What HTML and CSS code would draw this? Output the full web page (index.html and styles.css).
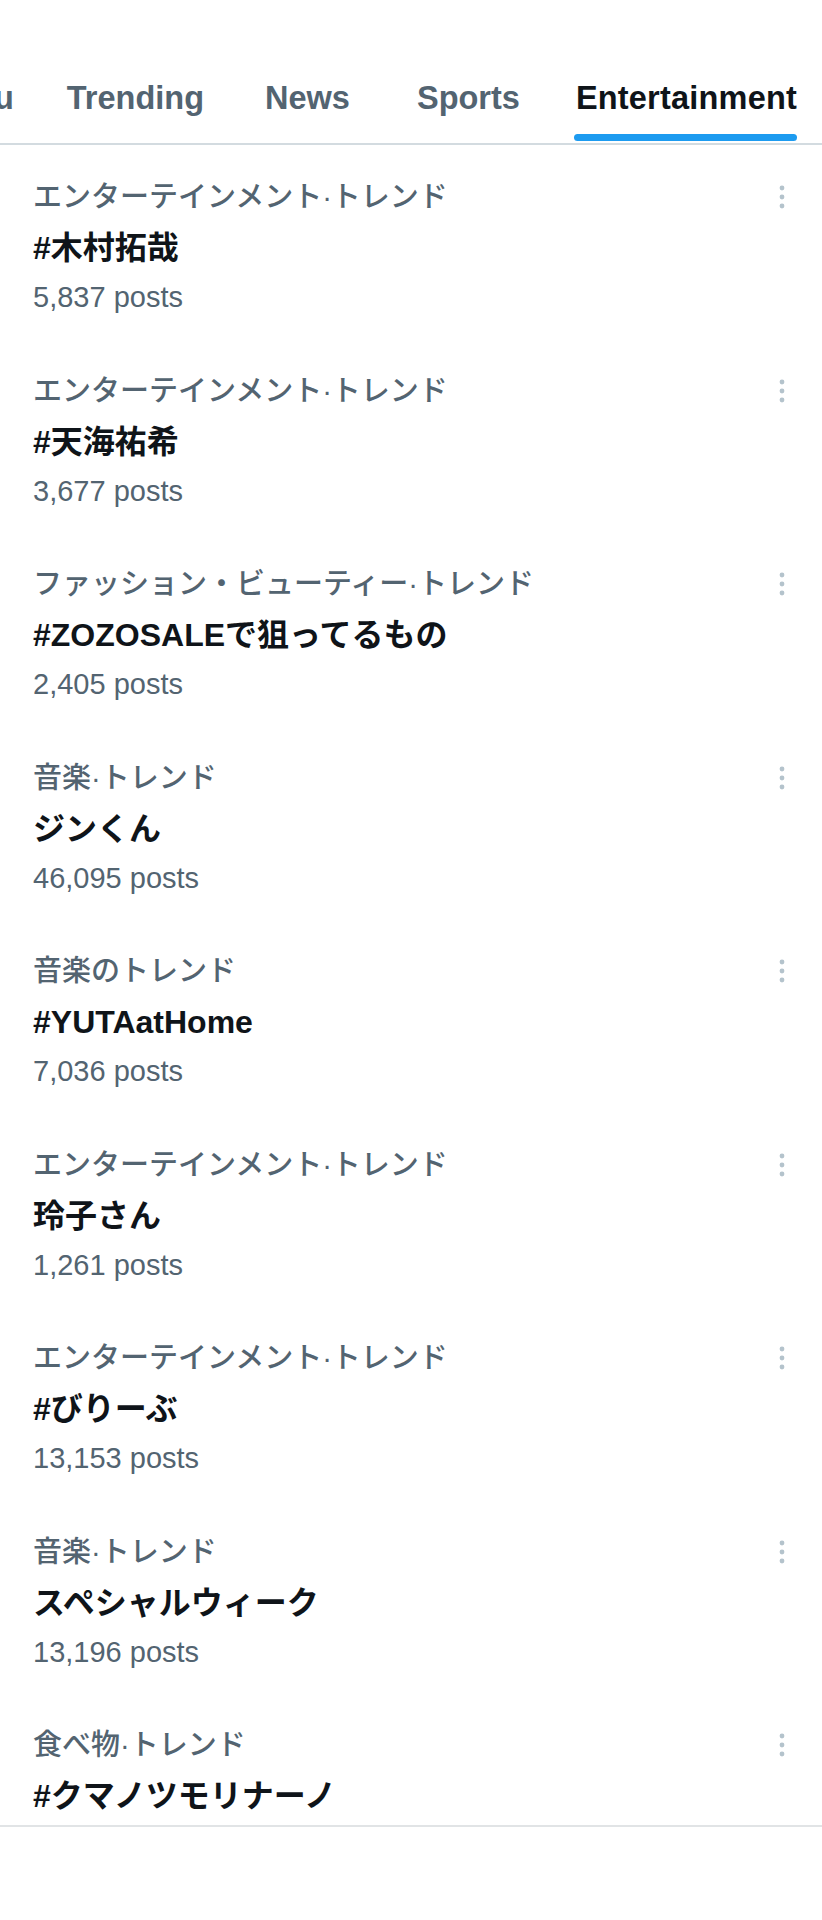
FILE: index.html
```html
<!DOCTYPE html>
<html lang="ja">
<head>
<meta charset="utf-8">
<title>Explore - Entertainment</title>
<link rel="stylesheet" href="styles.css">
</head>
<body>
<div class="page">
  <nav class="tabs">
    <div class="tabs-track">
      <a class="tab tab-foryou">For you</a>
      <a class="tab tab-trending">Trending</a>
      <a class="tab tab-news">News</a>
      <a class="tab tab-sports">Sports</a>
      <a class="tab tab-active">Entertainment</a>
    </div>
  </nav>
  <ul class="trends">
    <li class="trend">
      <div class="trend-body">
        <div class="cat">エンターテインメント·トレンド</div>
        <div class="title">#木村拓哉</div>
        <div class="count">5,837 posts</div>
      </div>
      <svg class="more" viewBox="0 0 10 40" width="10" height="40"><circle cx="5" cy="11" r="2.4"/><circle cx="5" cy="20" r="2.4"/><circle cx="5" cy="29" r="2.4"/></svg>
    </li>
    <li class="trend">
      <div class="trend-body">
        <div class="cat">エンターテインメント·トレンド</div>
        <div class="title">#天海祐希</div>
        <div class="count">3,677 posts</div>
      </div>
      <svg class="more" viewBox="0 0 10 40" width="10" height="40"><circle cx="5" cy="11" r="2.4"/><circle cx="5" cy="20" r="2.4"/><circle cx="5" cy="29" r="2.4"/></svg>
    </li>
    <li class="trend">
      <div class="trend-body">
        <div class="cat">ファッション・ビューティー·トレンド</div>
        <div class="title">#ZOZOSALEで狙ってるもの</div>
        <div class="count">2,405 posts</div>
      </div>
      <svg class="more" viewBox="0 0 10 40" width="10" height="40"><circle cx="5" cy="11" r="2.4"/><circle cx="5" cy="20" r="2.4"/><circle cx="5" cy="29" r="2.4"/></svg>
    </li>
    <li class="trend">
      <div class="trend-body">
        <div class="cat">音楽·トレンド</div>
        <div class="title">ジンくん</div>
        <div class="count">46,095 posts</div>
      </div>
      <svg class="more" viewBox="0 0 10 40" width="10" height="40"><circle cx="5" cy="11" r="2.4"/><circle cx="5" cy="20" r="2.4"/><circle cx="5" cy="29" r="2.4"/></svg>
    </li>
    <li class="trend">
      <div class="trend-body">
        <div class="cat">音楽のトレンド</div>
        <div class="title">#YUTAatHome</div>
        <div class="count">7,036 posts</div>
      </div>
      <svg class="more" viewBox="0 0 10 40" width="10" height="40"><circle cx="5" cy="11" r="2.4"/><circle cx="5" cy="20" r="2.4"/><circle cx="5" cy="29" r="2.4"/></svg>
    </li>
    <li class="trend">
      <div class="trend-body">
        <div class="cat">エンターテインメント·トレンド</div>
        <div class="title">玲子さん</div>
        <div class="count">1,261 posts</div>
      </div>
      <svg class="more" viewBox="0 0 10 40" width="10" height="40"><circle cx="5" cy="11" r="2.4"/><circle cx="5" cy="20" r="2.4"/><circle cx="5" cy="29" r="2.4"/></svg>
    </li>
    <li class="trend">
      <div class="trend-body">
        <div class="cat">エンターテインメント·トレンド</div>
        <div class="title">#びりーぶ</div>
        <div class="count">13,153 posts</div>
      </div>
      <svg class="more" viewBox="0 0 10 40" width="10" height="40"><circle cx="5" cy="11" r="2.4"/><circle cx="5" cy="20" r="2.4"/><circle cx="5" cy="29" r="2.4"/></svg>
    </li>
    <li class="trend">
      <div class="trend-body">
        <div class="cat">音楽·トレンド</div>
        <div class="title">スペシャルウィーク</div>
        <div class="count">13,196 posts</div>
      </div>
      <svg class="more" viewBox="0 0 10 40" width="10" height="40"><circle cx="5" cy="11" r="2.4"/><circle cx="5" cy="20" r="2.4"/><circle cx="5" cy="29" r="2.4"/></svg>
    </li>
    <li class="trend trend-cut">
      <div class="trend-body">
        <div class="cat">食べ物·トレンド</div>
        <div class="title">#クマノツモリナーノ</div>
      </div>
      <svg class="more" viewBox="0 0 10 40" width="10" height="40"><circle cx="5" cy="11" r="2.4"/><circle cx="5" cy="20" r="2.4"/><circle cx="5" cy="29" r="2.4"/></svg>
    </li>
  </ul>
</div>
</body>
</html>
```

FILE: styles.css
```css
html, body {
  margin: 0;
  padding: 0;
  background: #ffffff;
}

body {
  font-family: "Liberation Sans", "Noto Sans CJK JP", sans-serif;
  color: #0f1419;
}

.page {
  width: 822px;
  padding-top: 53px;
}

.tabs {
  height: 90px;
  border-bottom: 2px solid #d3dbe0;
  overflow: hidden;
}

.tabs-track {
  display: flex;
  justify-content: flex-end;
  height: 100%;
  padding-right: 25px;
}

.tab {
  position: relative;
  display: flex;
  align-items: center;
  flex: none;
  font-size: 32.5px;
  font-weight: 700;
  color: #536471;
  white-space: nowrap;
}

.tab-trending {
  margin-left: 53px;
}

.tab-news {
  margin-left: 61px;
}

.tab-sports {
  margin-left: 67px;
}

.tab-active {
  color: #0f1419;
  margin-left: 56px;
  letter-spacing: 0.2px;
}

.tab-active::after {
  content: "";
  position: absolute;
  left: -2px;
  right: 0;
  bottom: 2px;
  height: 7px;
  border-radius: 4px;
  background: #1d9bf0;
}

.trends {
  list-style: none;
  margin: 0;
  padding: 0;
  border-bottom: 2px solid #e1e4e6;
}

.trend {
  display: flex;
  align-items: flex-start;
  justify-content: space-between;
  padding: 32px 35px 21.5px 33px;
}

.trend-cut {
  padding-bottom: 5px;
}

.trend-body {
  display: flex;
  flex-direction: column;
}

.cat {
  font-size: 29px;
  line-height: 40px;
  font-weight: 500;
  color: #536471;
}

.title {
  font-size: 32px;
  line-height: 48px;
  font-weight: 700;
  color: #0f1419;
  margin-top: 7px;
}

.count {
  font-size: 29px;
  line-height: 40px;
  color: #536471;
  margin-top: 5px;
}

.more {
  flex: none;
  fill: #b4c3cc;
}
```
